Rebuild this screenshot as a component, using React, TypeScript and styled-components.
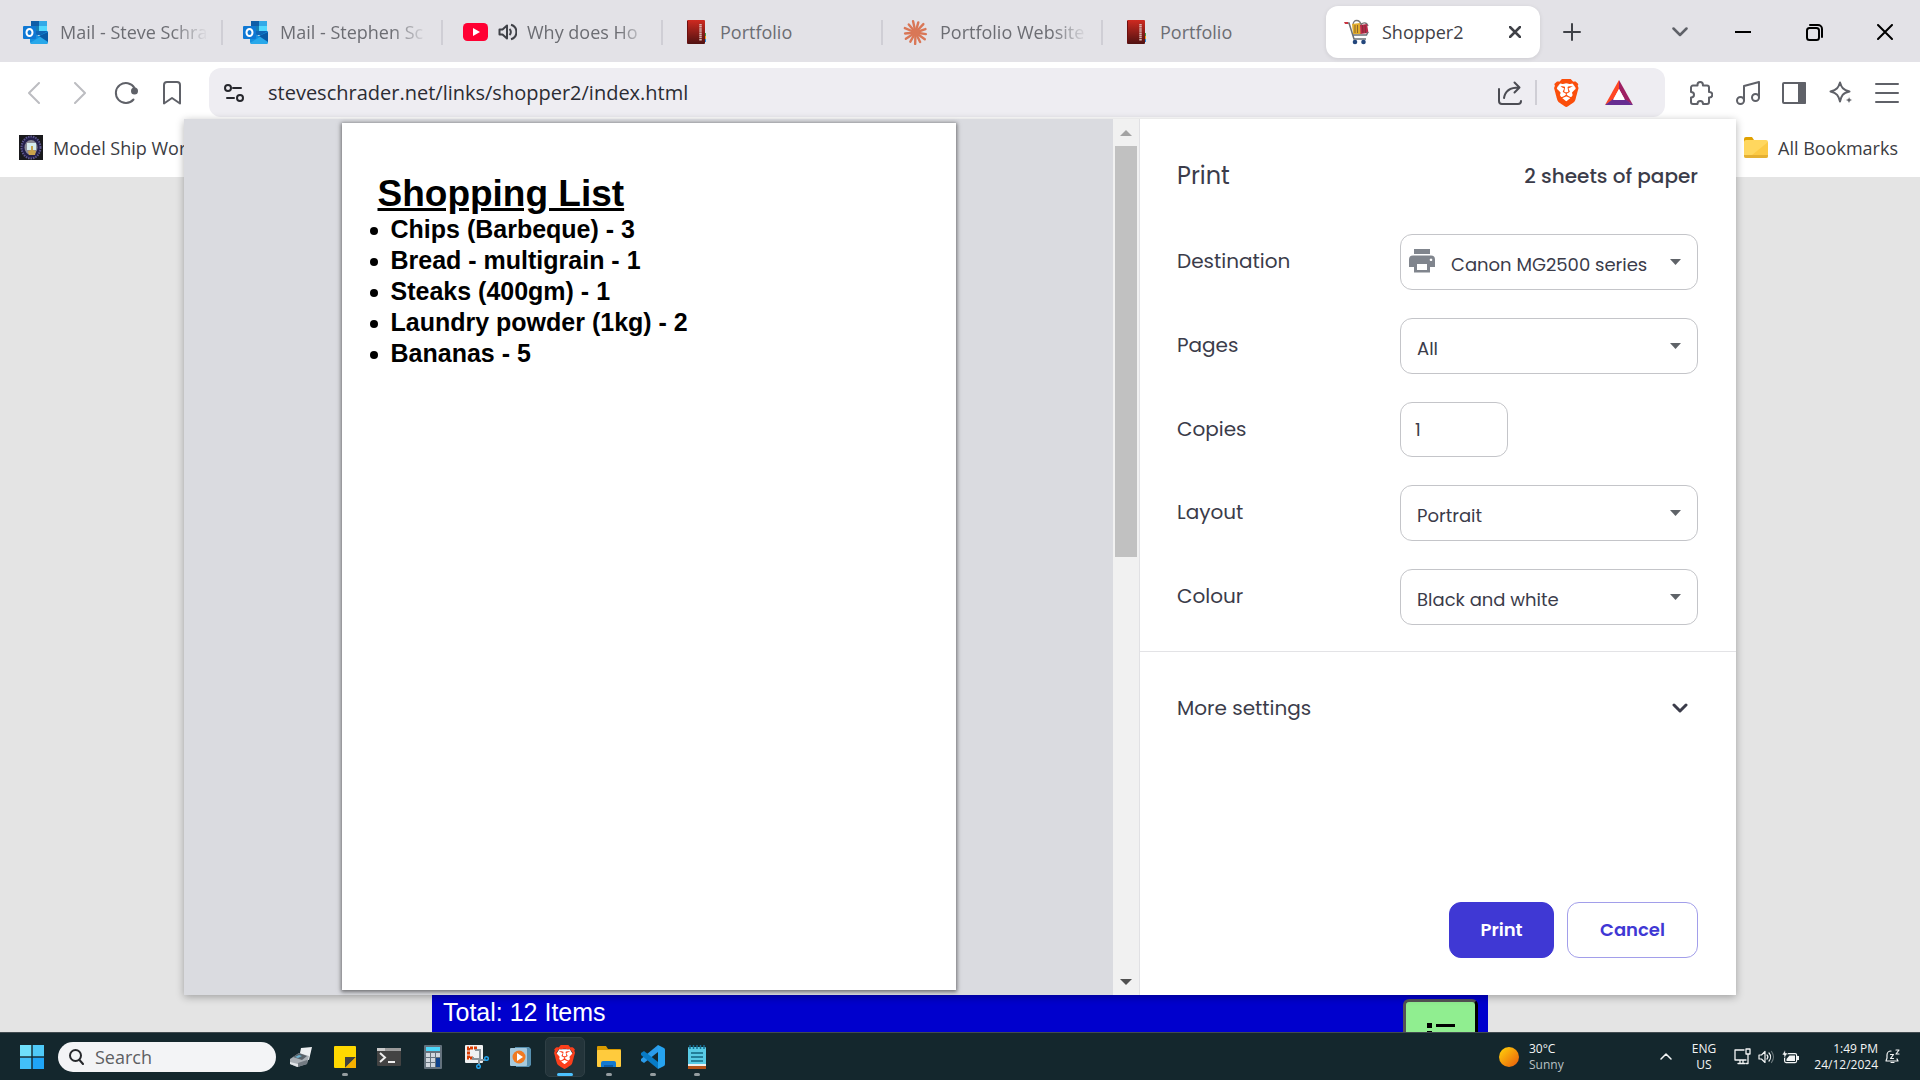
import React, { useState } from "react";
import styled, { createGlobalStyle } from "styled-components";
import { SiBrave } from "react-icons/si";

const uiFont = `"Segoe UI", "Open Sans", "Noto Sans", sans-serif`;
const dialogFont = `Poppins, Inter, "Open Sans", sans-serif`;

const GlobalStyle = createGlobalStyle`
  *, *::before, *::after { box-sizing: border-box; }
  body { margin: 0; font-family: ${uiFont}; background: #e4e4e4; }
  button, input, select { font: inherit; color: inherit; margin: 0; }
  svg { display: block; flex: none; }
`;

const Screen = styled.div`
  display: flex;
  flex-direction: column;
  height: 100vh;
  overflow: hidden;
`;

const BrowserWindow = styled.div`
  position: relative;
  flex: 1;
  min-height: 0;
  display: flex;
  flex-direction: column;
`;

/* ---------- tab strip ---------- */

const TabStrip = styled.header`
  display: flex;
  align-items: center;
  height: 62px;
  flex: none;
  padding: 2px 0 0 2px;
  background: #e3e2e7;
`;

const Tab = styled.div<{ $active?: boolean }>`
  position: relative;
  display: flex;
  align-items: center;
  gap: 12px;
  width: ${(p) => (p.$active ? 214 : 220)}px;
  height: 52px;
  margin-left: ${(p) => (p.$active ? 4 : 0)}px;
  padding: 0 ${(p) => (p.$active ? 19 : 14)}px 0 ${(p) => (p.$active ? 18 : 21)}px;
  border-radius: 12px;
  background: ${(p) => (p.$active ? "#ffffff" : "transparent")};
  box-shadow: ${(p) => (p.$active ? "0 1px 4px rgba(0, 0, 0, 0.1)" : "none")};
  color: ${(p) => (p.$active ? "#3f4147" : "#6c6d73")};
`;

const TabDivider = styled.span`
  width: 2px;
  height: 25px;
  margin: 0 -1px;
  flex: none;
  background: #cfced5;
`;

const TabTitle = styled.span<{ $fade?: boolean }>`
  flex: 1;
  min-width: 0;
  overflow: hidden;
  white-space: nowrap;
  font-size: 18px;
  line-height: 24px;
  ${(p) => p.$fade && "mask-image: linear-gradient(to right, #000 75%, transparent);"}
`;

const IconButton = styled.button<{ $width?: number }>`
  display: flex;
  align-items: center;
  justify-content: center;
  flex: none;
  width: ${(p) => p.$width ?? 46}px;
  height: 48px;
  padding: 0;
  border: 0;
  background: transparent;
`;

const CloseTab = styled(IconButton)`
  width: 12px;
`;

const WindowControls = styled.div`
  display: flex;
  margin-left: auto;
`;

/* ---------- toolbar ---------- */

const Toolbar = styled.nav`
  display: flex;
  align-items: center;
  flex: none;
  padding: 6px 10px 1px 11px;
  background: #ffffff;
  color: #5f6168;
`;

const AddressBar = styled.div`
  display: flex;
  align-items: center;
  flex: 1;
  height: 49px;
  margin: 0 12px 0 14px;
  padding: 0 32px 0 15px;
  border-radius: 12px;
  background: #eeedf2;
`;

const AddressInput = styled.input`
  flex: 1;
  min-width: 0;
  margin-left: 24px;
  padding: 0;
  border: 0;
  outline: 0;
  background: transparent;
  color: #2b2c33;
  font-size: 20px;
  line-height: 28px;
`;

const AddressDivider = styled.span`
  width: 2px;
  height: 25px;
  margin: 0 17px 0 13px;
  background: #cfced5;
`;

const AddressButton = styled(IconButton)`
  width: auto;
  & + & { margin-left: 26px; }
`;

const BookmarksBar = styled.div`
  display: flex;
  align-items: center;
  justify-content: space-between;
  height: 59px;
  flex: none;
  padding: 0 22px 0 19px;
  background: #ffffff;
`;

const Bookmark = styled.a`
  display: flex;
  align-items: center;
  gap: 10px;
  color: #3b3c42;
  font-size: 18px;
  line-height: 24px;
  text-decoration: none;
  white-space: nowrap;
`;

/* ---------- web page ---------- */

const WebPage = styled.main`
  display: flex;
  flex: 1;
  min-height: 0;
  align-items: flex-end;
  justify-content: center;
  background: #e4e4e4;
`;

const TotalBar = styled.div`
  display: flex;
  justify-content: space-between;
  align-items: flex-start;
  width: 55%;
  height: 44px;
  padding: 11px 10px 0 11px;
  overflow: hidden;
  background: #0000cd;
  color: #ffffff;
  font: 25px/26px "Liberation Sans", Arial, sans-serif;
`;

const ListButton = styled.button`
  display: flex;
  justify-content: center;
  width: 75px;
  height: 64px;
  padding: 20px 0 0;
  border: 3px outset #000000;
  border-radius: 6px;
  background: #90ee90;
`;

/* ---------- print dialog ---------- */

const PrintDialog = styled.section`
  position: absolute;
  inset: 119px 184px 37px;
  display: flex;
  background: #ffffff;
  box-shadow: 0 2px 8px rgba(0, 0, 0, 0.3);
`;

const Preview = styled.div`
  display: flex;
  justify-content: center;
  flex: 1;
  padding: 4px 0 5px;
  background: #dadbe0;
`;

const Paper = styled.article`
  height: 100%;
  aspect-ratio: 614 / 867;
  padding: 50px 36px;
  background: #ffffff;
  box-shadow: 0 1px 4px 1px rgba(0, 0, 0, 0.5);
  color: #000000;
  font-family: "Liberation Sans", Arial, sans-serif;
  font-weight: 700;
`;

const PaperTitle = styled.h1`
  margin: 0;
  font-size: 37px;
  line-height: 41px;
  text-decoration: underline;
`;

const ShoppingList = styled.ul`
  margin: 0;
  padding: 0 0 0 13px;
  list-style: none;
  font-size: 25px;
  line-height: 31px;
`;

const ShoppingItem = styled.li`
  display: flex;
  align-items: center;
  gap: 13px;
  margin-left: -21px;
  &::before {
    content: "";
    width: 8px;
    height: 8px;
    margin-top: 2px;
    border-radius: 50%;
    background: #000000;
  }
`;

const ScrollTrack = styled.div`
  display: flex;
  flex-direction: column;
  align-items: center;
  width: 26px;
  background: #f1f1f1;
`;

const ScrollArrow = styled.button<{ $color: string }>`
  display: flex;
  align-items: center;
  justify-content: center;
  width: 26px;
  height: 27px;
  padding: 0;
  border: 0;
  background: transparent;
  color: ${(p) => p.$color};
`;

const ScrollRail = styled.div`
  flex: 1;
  width: 22px;
`;

const ScrollThumb = styled.div`
  height: 50%;
  background: #c1c1c1;
`;

const Panel = styled.form`
  display: flex;
  flex-direction: column;
  width: 597px;
  border-left: 1px solid #e1e1e4;
  background: #ffffff;
  color: #3b3c4a;
  font-family: ${dialogFont};
  font-size: 20px;
  font-weight: 400;
  line-height: 28px;
`;

const PanelHeader = styled.div`
  display: flex;
  align-items: center;
  justify-content: space-between;
  height: 113px;
  margin: 0 38px 0 37px;
`;

const PanelTitle = styled.h2`
  margin: 0;
  font-size: 24px;
  font-weight: 400;
`;

const SheetCount = styled.span`
  font-weight: 500;
`;

const Settings = styled.div`
  display: flex;
  flex-direction: column;
  gap: 28px;
  padding: 2px 38px 26px 37px;
  border-bottom: 1px solid #e3e3e6;
`;

const SettingRow = styled.div`
  display: grid;
  grid-template-columns: 1fr 298px;
  align-items: center;
`;

const SettingLabel = styled.label`
  padding-bottom: 2px;
`;

const SelectWrap = styled.div`
  position: relative;
  color: #80858d;
`;

const SelectBox = styled.select<{ $withIcon?: boolean }>`
  appearance: none;
  display: block;
  width: 100%;
  height: 56px;
  padding: 5px 50px 0 ${(p) => (p.$withIcon ? 50 : 16)}px;
  border: 1px solid #c4c5c9;
  border-radius: 12px;
  background: #ffffff;
  color: #3b3c4a;
  font-size: 18px;
`;

const SelectArrow = styled.svg`
  position: absolute;
  right: 17px;
  top: 25px;
  pointer-events: none;
`;

const PrinterIcon = styled.svg`
  position: absolute;
  left: 9px;
  top: 15px;
  pointer-events: none;
`;

const CopiesInput = styled.input`
  width: 108px;
  height: 55px;
  padding: 0 14px;
  border: 1px solid #c4c5c9;
  border-radius: 12px;
  background: #ffffff;
  font-size: 18px;
`;

const MoreSettings = styled.button`
  display: flex;
  align-items: center;
  justify-content: space-between;
  height: 112px;
  padding: 0 48px 0 37px;
  border: 0;
  background: transparent;
`;

const PanelFooter = styled.div`
  display: flex;
  justify-content: flex-end;
  gap: 13px;
  margin-top: auto;
  padding: 0 38px 37px;
`;

const ActionButton = styled.button<{ $primary?: boolean }>`
  width: ${(p) => (p.$primary ? 105 : 131)}px;
  height: 56px;
  padding: 0;
  border: 1px solid ${(p) => (p.$primary ? "#3f38d4" : "#a29eea")};
  border-radius: 12px;
  background: ${(p) => (p.$primary ? "#3f38d4" : "#ffffff")};
  color: ${(p) => (p.$primary ? "#ffffff" : "#3f38d4")};
  font-size: 18px;
  font-weight: 600;
`;

/* ---------- taskbar ---------- */

const Taskbar = styled.footer`
  display: flex;
  align-items: center;
  flex: none;
  height: 48px;
  padding: 0 20px 0 20px;
  border-top: 1px solid #414b50;
  background: #14272d;
  color: #f3f5f5;
`;

const StartButton = styled(IconButton)`
  width: 24px;
  margin-right: 14px;
`;

const SearchBox = styled.label`
  display: flex;
  align-items: center;
  gap: 11px;
  width: 218px;
  height: 30px;
  margin-right: 3px;
  padding: 0 10px;
  border-radius: 15px;
  background: #f3f4f6;
  color: #26282c;
`;

const SearchInput = styled.input`
  width: 100%;
  min-width: 0;
  padding: 0;
  border: 0;
  outline: 0;
  background: transparent;
  font-size: 18px;
  line-height: 24px;
  &::placeholder { color: #5d5f63; opacity: 1; }
`;

const TaskButton = styled.button<{ $active?: boolean; $running?: boolean }>`
  position: relative;
  display: flex;
  align-items: center;
  justify-content: center;
  width: 40px;
  height: 40px;
  margin: 0 2px;
  padding: 0;
  border: 1px solid ${(p) => (p.$active ? "#2f3f45" : "transparent")};
  border-radius: 5px;
  background: ${(p) => (p.$active ? "#23343a" : "transparent")};
  &::after {
    content: "";
    display: ${(p) => (p.$running || p.$active ? "block" : "none")};
    position: absolute;
    bottom: 0;
    width: ${(p) => (p.$active ? 16 : 6)}px;
    height: 3px;
    border-radius: 2px;
    background: ${(p) => (p.$active ? "#4cc2ff" : "#959da0")};
  }
`;

const Weather = styled.div`
  display: flex;
  align-items: center;
  gap: 10px;
  margin-left: auto;
  margin-right: 88px;
  width: 73px;
`;

const Stack = styled.div<{ $align?: string }>`
  display: flex;
  flex-direction: column;
  font-size: 12px;
  line-height: 16px;
  white-space: nowrap;
  text-align: ${(p) => p.$align ?? "left"};
`;

const Muted = styled.span`
  color: #b9c1c4;
`;

const Language = styled.div`
  width: 26px;
  margin: 0 17px 0 19px;
`;

const Tray = styled.div`
  display: flex;
  align-items: center;
  gap: 7px;
`;

const Clock = styled.div`
  width: 66px;
  margin: 0 7px 0 13px;
`;

/* ---------- drawings ---------- */

const Outlook = () => (
  <svg width="25" height="23" viewBox="0 0 25 23">
    <rect x="8" y="0" width="16" height="14" fill="#1066b5" />
    <rect x="8" y="0" width="8" height="5" fill="#0f5ea8" />
    <rect x="16" y="0" width="8" height="5" fill="#32a9e7" />
    <rect x="16" y="5" width="8" height="5" fill="#50d9ff" />
    <rect x="8" y="5" width="8" height="5" fill="#167eb4" />
    <path d="M7 10l9 5 9-5v11a2 2 0 0 1-2 2H9a2 2 0 0 1-2-2z" fill="#1490df" />
    <path d="M7 22l18-11v10a2 2 0 0 1-2 2H9z" fill="#28a8ea" />
    <path d="M25 11v10l-9-6z" fill="#0a5aa5" />
    <rect x="0" y="5" width="13" height="13" rx="1" fill="#0f78d4" />
    <ellipse cx="6.500" cy="11.500" rx="3" ry="3.500" fill="none" stroke="#fff" strokeWidth="2" />
  </svg>
);

const YouTube = () => (
  <svg width="25" height="18" viewBox="0 0 25 18">
    <rect width="25" height="18" rx="4.500" fill="#ff0033" />
    <path d="M10 5l7 4-7 4z" fill="#fff" />
  </svg>
);

const SoundIcon = styled.svg`
  margin: 0 -2px;
`;

const Sound = () => (
  <SoundIcon width="19" height="18" viewBox="0 0 19 18" fill="none" stroke="#3f4147" strokeWidth="2">
    <path d="M1.500 6.500h3L9 2.500v13l-4.500-4H1.500z" strokeLinejoin="round" />
    <path d="M11.500 6a4 4 0 0 1 0 6M13 1.800a7.500 7.500 0 0 1 0 14.400" />
  </SoundIcon>
);

const Portfolio = () => (
  <svg width="25" height="25" viewBox="-2 0 25 25">
    <defs>
      <linearGradient id="cover" x1="0" y1="0" x2="0" y2="1">
        <stop offset="0" stopColor="#cf2a20" />
        <stop offset="1" stopColor="#4f1111" />
      </linearGradient>
    </defs>
    <rect x="20" y="13" width="1" height="3" fill="#42a047" />
    <rect x="20" y="16" width="1" height="3" fill="#f0a020" />
    <rect x="20" y="19" width="1" height="3" fill="#2a8be0" />
    <rect x="2" y="0" width="18" height="24" rx="1" fill="url(#cover)" />
    <rect x="2" y="1" width="1" height="22" fill="#6b1010" />
    <path d="M15.500 4v17" stroke="#d9b6b3" strokeWidth="2.500" strokeDasharray="1.500 .6" />
  </svg>
);

const Burst = () => (
  <svg width="25" height="25" viewBox="0 0 25 25" stroke="#d97757" strokeWidth="2.400" strokeLinecap="round">
    {Array.from({ length: 13 }, (_, i) => {
      const a = (i * 2 * Math.PI) / 13 + 0.15;
      const r = i % 2 ? 11.5 : 10.5;
      return <line key={i} x1="12.500" y1="12.500" x2={12.5 + r * Math.cos(a)} y2={12.5 + r * Math.sin(a)} />;
    })}
    <circle cx="12.500" cy="12.500" r="2.500" fill="#d97757" />
  </svg>
);

const Cart = () => (
  <svg width="26" height="26" viewBox="0 0 26 26">
    <path d="M9 6c0-6 7-6 8 0M17 6c1-3 6-3 7 1" fill="none" stroke="#777" strokeWidth="1.300" />
    <path d="M8 5l8-1 1 11H9z" fill="#e2ad2c" />
    <path d="M16 6l7-1 1.500 9-8 1z" fill="#bb2849" />
    <path d="M11 6v8M13.500 6v8M18.500 6l.5 8M21 6l.5 8" stroke="#54382c" strokeWidth=".6" />
    <path d="M1 4h4l5 16h12M8.500 16h14l1.500-3" fill="none" stroke="#6b7076" strokeWidth="1.500" />
    <path d="M0 3h4v2H1z" fill="#c93541" />
    <circle cx="11" cy="23" r="2.300" fill="#24477c" />
    <circle cx="19.500" cy="23" r="2.300" fill="#24477c" />
  </svg>
);

const BraveLion = ({ size = 28, color = "#fb4e0b" }) => (
  <svg width={size * 0.88} height={size} viewBox="0 0 24 28" preserveAspectRatio="none">
    <path d="M6 5h12l3 5-3 10-6 5-6-5L3 10z" fill="#fff" />
    <SiBrave x="-2" y="0" size={28} color={color} />
  </svg>
);

const RewardsTriangle = () => (
  <svg width="28" height="26" viewBox="0 0 28 26">
    <path d="M14 0L0 25l8-5 6-11z" fill="#ff4724" />
    <path d="M14 0l14 25-8-5-6-11z" fill="#9e1f63" />
    <path d="M0 25h28l-8-6H8z" fill="#662d91" />
    <path d="M14 9l6 11H8z" fill="#fff" />
  </svg>
);

const line = { fill: "none", stroke: "currentColor", strokeWidth: 2, strokeLinecap: "round", strokeLinejoin: "round" } as const;

const ShipBadge = () => (
  <svg width="24" height="25" viewBox="0 0 24 25">
    <rect width="24" height="25" fill="#19191c" />
    <ellipse cx="12" cy="12.500" rx="9.500" ry="11" fill="#24204c" stroke="#5c568d" strokeWidth="2" strokeDasharray="1.500 1" />
    <ellipse cx="12" cy="12.500" rx="6.500" ry="7.500" fill="#8d8c96" />
    <path d="M8 8h9v7H8z" fill="#d6ecee" />
    <path d="M9 16l3-1v-4h2v4l3 1-1 4h-6z" fill="#c9a24b" />
  </svg>
);

const Folder = () => (
  <svg width="24" height="21" viewBox="0 0 24 21">
    <path d="M0 2q0-2 2-2h6l2 3h12v8H0z" fill="#e0a100" />
    <rect y="3" width="24" height="18" rx="2" fill="#ffd75e" />
    <path d="M0 18h24v1q0 2-2 2H2q-2 0-2-2z" fill="#e5b032" />
    <path d="M24 5v13H8z" fill="#fcca45" />
  </svg>
);

const Caret = () => (
  <SelectArrow width="11" height="7" viewBox="0 0 11 7">
    <path d="M0 0h11L5.500 6z" fill="#5f6368" />
  </SelectArrow>
);

/* ---------- app ---------- */

const tabs = [
  { title: "Mail - Steve Schra", icon: <Outlook />, fade: true },
  { title: "Mail - Stephen Sc", icon: <Outlook />, fade: true },
  { title: "Why does Ho", icon: <YouTube />, sound: true, fade: true },
  { title: "Portfolio", icon: <Portfolio /> },
  { title: "Portfolio Website", icon: <Burst />, fade: true },
  { title: "Portfolio", icon: <Portfolio /> },
];

const items = ["Chips (Barbeque) - 3", "Bread - multigrain - 1", "Steaks (400gm) - 1", "Laundry powder (1kg) - 2", "Bananas - 5"];

function SelectSetting({ id, label, options, printer }: { id: string; label: string; options: string[]; printer?: boolean }) {
  return (
    <SettingRow>
      <SettingLabel htmlFor={id}>{label}</SettingLabel>
      <SelectWrap>
        <SelectBox id={id} $withIcon={printer}>
          {options.map((o) => (
            <option key={o}>{o}</option>
          ))}
        </SelectBox>
        {printer && (
          <PrinterIcon width="26" height="24" viewBox="0 0 26 24">
            <path fill="currentColor" fillRule="evenodd" d="M5 0h16v5H5zM4 6.500h18a4 4 0 0 1 4 4V18h-5v5.500H5V18H0v-7.500a4 4 0 0 1 4-4zM8 15v6h10v-6zM22 9.500a1.300 1.300 0 1 0 .01 0z" />
          </PrinterIcon>
        )}
        <Caret />
      </SelectWrap>
    </SettingRow>
  );
}

export default function App() {
  const [url, setUrl] = useState("steveschrader.net/links/shopper2/index.html");
  const [copies, setCopies] = useState("1");
  return (
    <Screen>
      <GlobalStyle />
      <BrowserWindow>
        <TabStrip>
          {tabs.map((t, i) => (
            <React.Fragment key={i}>
              <Tab>
                {t.icon}
                {t.sound && <Sound />}
                <TabTitle $fade={t.fade}>{t.title}</TabTitle>
              </Tab>
              {i < tabs.length - 1 && <TabDivider />}
            </React.Fragment>
          ))}
          <Tab $active>
            <Cart />
            <TabTitle>Shopper2</TabTitle>
            <CloseTab aria-label="Close tab">
              <svg width="12" height="12" viewBox="0 0 12 12" {...line} strokeWidth={2.5}>
                <path d="M1 1l10 10M11 1L1 11" />
              </svg>
            </CloseTab>
          </Tab>
          <IconButton $width={64} aria-label="New tab">
            <svg width="18" height="18" viewBox="0 0 18 18" {...line} stroke="#3f4147">
              <path d="M9 1v16M1 9h16" />
            </svg>
          </IconButton>
          <WindowControls>
            <IconButton $width={56} aria-label="Search tabs">
              <svg width="16" height="10" viewBox="0 0 16 10" {...line} stroke="#5f6168" strokeWidth={2.5}>
                <path d="M1.500 1.500L8 8l6.500-6.500" />
              </svg>
            </IconButton>
            <IconButton $width={70} aria-label="Minimise">
              <svg width="16" height="2" viewBox="0 0 16 2"><path d="M0 1h16" stroke="#000" strokeWidth="2" /></svg>
            </IconButton>
            <IconButton $width={72} aria-label="Restore">
              <svg width="17" height="17" viewBox="0 0 17 17" {...line} stroke="#000">
                <rect x="1" y="4" width="12" height="12" rx="2.500" />
                <path d="M4 1h8a4 4 0 0 1 4 4v8" />
              </svg>
            </IconButton>
            <IconButton $width={70} aria-label="Close window">
              <svg width="16" height="16" viewBox="0 0 16 16" {...line} stroke="#000">
                <path d="M1 1l14 14M15 1L1 15" />
              </svg>
            </IconButton>
          </WindowControls>
        </TabStrip>

        <Toolbar>
          <IconButton aria-label="Back">
            <svg width="12" height="22" viewBox="0 0 12 22" {...line} stroke="#bcbdc1"><path d="M11 1L1 11l10 10" /></svg>
          </IconButton>
          <IconButton aria-label="Forward">
            <svg width="12" height="22" viewBox="0 0 12 22" {...line} stroke="#bcbdc1"><path d="M1 1l10 10L1 21" /></svg>
          </IconButton>
          <IconButton aria-label="Reload">
            <svg width="24" height="24" viewBox="0 0 24 24" {...line}>
              <path d="M19.500 18.500A10 10 0 1 1 20.500 7" />
              <circle cx="20.500" cy="10" r="2.500" fill="currentColor" stroke="currentColor" />
            </svg>
          </IconButton>
          <IconButton aria-label="Bookmark">
            <svg width="18" height="24" viewBox="0 0 18 24" {...line}><path d="M1 22.500V4a3 3 0 0 1 3-3h10a3 3 0 0 1 3 3v18.500l-8-5.500z" /></svg>
          </IconButton>
          <AddressBar>
            <svg width="20" height="18" viewBox="0 0 20 18" {...line} stroke="#26272d">
              <circle cx="4" cy="4" r="3" /><path d="M9 4h8M3 14h7" /><circle cx="16" cy="14" r="3" />
            </svg>
            <AddressInput aria-label="Address" value={url} onChange={(e) => setUrl(e.target.value)} />
            <AddressButton aria-label="Share">
              <svg width="24" height="24" viewBox="0 0 24 24" {...line} stroke="#4b4c53">
                <path d="M1 8v12a3 3 0 0 0 3 3h16a3 3 0 0 0 3-3M6 17C7 10 12 6.500 21 6.500M16.500 1.500l5 5-5 5" />
              </svg>
            </AddressButton>
            <AddressDivider />
            <AddressButton aria-label="Brave Shields"><BraveLion /></AddressButton>
            <AddressButton aria-label="Rewards"><RewardsTriangle /></AddressButton>
          </AddressBar>
          <IconButton $width={47} aria-label="Extensions">
            <svg width="24" height="24" viewBox="0 0 24 24" {...line}>
              <path d="M2 6.500a2 2 0 0 1 2-2h4.500V3.800a2.700 2.700 0 0 1 5.400 0v.7H18a2 2 0 0 1 2 2V11h.6a2.700 2.700 0 0 1 0 5.400H20V21a2 2 0 0 1-2 2h-4c0-4-5.500-4-5.500 0H4a2 2 0 0 1-2-2v-4.500c4 0 4-5.500 0-5.500z" />
            </svg>
          </IconButton>
          <IconButton $width={47} aria-label="Media">
            <svg width="24" height="24" viewBox="0 0 24 24" {...line}>
              <circle cx="4.500" cy="19.500" r="3.500" /><circle cx="19.500" cy="16.500" r="3.500" /><path d="M8 19.500V5l15-4v15.500" />
            </svg>
          </IconButton>
          <IconButton $width={46} aria-label="Side panel">
            <svg width="24" height="22" viewBox="0 0 24 22" {...line}>
              <rect x="1" y="1" width="22" height="20" rx="1" /><path d="M17 1h6v20h-6z" fill="currentColor" />
            </svg>
          </IconButton>
          <IconButton $width={47} aria-label="Assistant">
            <svg width="24" height="24" viewBox="0 0 24 24" {...line}>
              <path d="M11 1.500c1.500 5 3 7.500 9.500 9-7 1.500-8 4-9.500 10-1.500-6-3-8.500-9.500-10C8 9 9.500 6.500 11 1.500z" />
              <path d="M20 14l1.200 3.800L25 19l-3.800 1.200L20 24l-1.200-3.800L15 19l3.800-1.200z" fill="currentColor" stroke="#fff" strokeWidth="1" />
            </svg>
          </IconButton>
          <IconButton $width={46} aria-label="Menu">
            <svg width="24" height="20" viewBox="0 0 24 20" {...line}><path d="M1 1h22M1 10h22M1 19h22" /></svg>
          </IconButton>
        </Toolbar>

        <BookmarksBar>
          <Bookmark href="#"><ShipBadge />Model Ship World</Bookmark>
          <Bookmark href="#"><Folder />All Bookmarks</Bookmark>
        </BookmarksBar>

        <WebPage>
          <TotalBar>
            <span>Total: 12 Items</span>
            <ListButton aria-label="Show list">
              <svg width="28" height="26" viewBox="0 0 28 26" fill="#000">
                <path d="M0 1h5v5H0zM9 2h19v3H9zM0 9h5v5H0zM9 10h19v3H9z" />
              </svg>
            </ListButton>
          </TotalBar>
        </WebPage>

        <PrintDialog role="dialog" aria-label="Print">
          <Preview>
            <Paper>
              <PaperTitle>Shopping List</PaperTitle>
              <ShoppingList>
                {items.map((i) => <ShoppingItem key={i}>{i}</ShoppingItem>)}
              </ShoppingList>
            </Paper>
          </Preview>
          <ScrollTrack>
            <ScrollArrow $color="#a3a3a3" aria-label="Scroll up">
              <svg width="12" height="6" viewBox="0 0 12 6"><path d="M0 6l6-6 6 6z" fill="currentColor" /></svg>
            </ScrollArrow>
            <ScrollRail><ScrollThumb /></ScrollRail>
            <ScrollArrow $color="#505050" aria-label="Scroll down">
              <svg width="12" height="6" viewBox="0 0 12 6"><path d="M0 0l6 6 6-6z" fill="currentColor" /></svg>
            </ScrollArrow>
          </ScrollTrack>
          <Panel onSubmit={(e) => e.preventDefault()}>
            <PanelHeader>
              <PanelTitle>Print</PanelTitle>
              <SheetCount>2 sheets of paper</SheetCount>
            </PanelHeader>
            <Settings>
              <SelectSetting id="destination" label="Destination" options={["Canon MG2500 series"]} printer />
              <SelectSetting id="pages" label="Pages" options={["All"]} />
              <SettingRow>
                <SettingLabel htmlFor="copies">Copies</SettingLabel>
                <CopiesInput id="copies" value={copies} onChange={(e) => setCopies(e.target.value)} />
              </SettingRow>
              <SelectSetting id="layout" label="Layout" options={["Portrait"]} />
              <SelectSetting id="colour" label="Colour" options={["Black and white"]} />
            </Settings>
            <MoreSettings type="button">
              More settings
              <svg width="16" height="10" viewBox="0 0 16 10" {...line} strokeWidth={3}><path d="M2 2l6 6 6-6" /></svg>
            </MoreSettings>
            <PanelFooter>
              <ActionButton $primary type="submit">Print</ActionButton>
              <ActionButton type="button">Cancel</ActionButton>
            </PanelFooter>
          </Panel>
        </PrintDialog>
      </BrowserWindow>

      <Taskbar>
        <StartButton aria-label="Start">
          <svg width="24" height="24" viewBox="0 0 24 24">
            <path d="M0 0h11.300v11.300H0z" fill="#6fe0fb" /><path d="M12.700 0H24v11.300H12.700z" fill="#4fcaf8" />
            <path d="M0 12.700h11.300V24H0z" fill="#42c0f8" /><path d="M12.700 12.700H24V24H12.700z" fill="#1fa5f7" />
          </svg>
        </StartButton>
        <SearchBox>
          <svg width="16" height="16" viewBox="0 0 16 16" {...line}><circle cx="7.500" cy="6.500" r="5.500" /><path d="M11.500 11l3.500 4" /></svg>
          <SearchInput aria-label="Search" placeholder="Search" />
        </SearchBox>
        <TaskButton aria-label="Printer">
          <svg width="24" height="22" viewBox="0 0 24 22">
            <path d="M12 2l11-1-3 13-10-2z" fill="#eef0f2" />
            <path d="M1 13l9-6 10 3-2 8-10 3-7-3z" fill="#a9afb5" />
            <path d="M4 11l6-4 8 3-5 4z" fill="#596269" /><path d="M1 16l8 2v3l-8-3z" fill="#e2e5e8" /><path d="M9 17l9-3v4l-9 3z" fill="#737b82" />
            <path d="M6 11l4-2 3 1-4 2z" fill="#6fb2cf" />
          </svg>
        </TaskButton>
        <TaskButton $running aria-label="Sticky Notes">
          <svg width="22" height="22" viewBox="0 0 22 22"><rect width="22" height="22" rx="1" fill="#ffd800" /><path d="M11 22V11h11L11 22z" fill="#41413f" /><path d="M22 11v11H11z" fill="#f6b000" /></svg>
        </TaskButton>
        <TaskButton aria-label="Terminal">
          <svg width="24" height="18" viewBox="0 0 24 18"><rect width="24" height="18" rx="1" fill="#434343" /><path d="M0 0h24v3H0z" fill="#9a9a9a" /><path d="M0 0h8v3H0z" fill="#cbcbcb" /><path d="M3 5l5 4.500L3 14M11 14h7" stroke="#eee" strokeWidth="2" fill="none" /></svg>
        </TaskButton>
        <TaskButton aria-label="Calculator">
          <svg width="18" height="24" viewBox="0 0 18 24"><rect width="18" height="24" rx="1" fill="#64727d" /><path d="M2 2h14v4H2z" fill="#4cd7fa" /><path d="M2 8h4v4H2zM7 8h4v4H7zM12 8h4v4h-4zM2 13h4v4H2zM7 13h4v4H7zM2 18h4v4H2zM7 18h4v4H7z" fill="#d0d7de" /><path d="M12 13h4v9h-4z" fill="#0e438d" /></svg>
        </TaskButton>
        <TaskButton aria-label="Snipping Tool">
          <svg width="24" height="24" viewBox="0 0 24 24"><rect width="18" height="18" rx="1" fill="#f0f1f2" /><path d="M12 3H3.500v10H8" fill="none" stroke="#d83b01" strokeWidth="3" strokeDasharray="3 1" /><path d="M10 5h5v9H8v-2" fill="none" stroke="#8b9399" strokeWidth="2" /><path d="M14 15h6M14 15v5" stroke="#8b9399" strokeWidth="2" /><circle cx="21.500" cy="13.500" r="1.800" fill="none" stroke="#22a4ee" strokeWidth="1.500" /><circle cx="13.500" cy="21.500" r="1.800" fill="none" stroke="#22a4ee" strokeWidth="1.500" /></svg>
        </TaskButton>
        <TaskButton aria-label="Media Player">
          <svg width="22" height="20" viewBox="0 0 22 20"><path d="M5 0h14l2 2v16l-2 2H6z" fill="#5790b0" /><rect y="1" width="17" height="18" rx="1" fill="#a7cadd" /><circle cx="9" cy="10" r="6.500" fill="#f07a22" /><path d="M7 6l6 4-6 4z" fill="#fff" /></svg>
        </TaskButton>
        <TaskButton $active aria-label="Brave"><BraveLion size={24} color="#fb3f1c" /></TaskButton>
        <TaskButton $running aria-label="File Explorer">
          <svg width="24" height="22" viewBox="0 0 24 22"><path d="M0 1q0-1 1-1h8l2 3h12q1 0 1 1v5H0z" fill="#d99a00" /><rect y="4" width="24" height="17" rx="1" fill="#ffcb3d" /><path d="M4 21v-4q0-2 2-2h11q2 0 2 2v4z" fill="#1479cf" /><path d="M7 19h9v2H7z" fill="#0d5aa5" /></svg>
        </TaskButton>
        <TaskButton $running aria-label="Visual Studio Code">
          <svg width="24" height="24" viewBox="0 0 24 24"><path d="M17 0l6 3q1 .5 1 2v14q0 1.500-1 2l-6 3z" fill="#26a3ef" /><path d="M17 0v7L3 18l-3-2v-2z" fill="#2b9bea" /><path d="M17 24v-7L3 6 0 8v2z" fill="#087bc6" /></svg>
        </TaskButton>
        <TaskButton $running aria-label="Notepad">
          <svg width="18" height="24" viewBox="0 0 18 24"><path d="M0 20h18v4H0z" fill="#b55218" /><rect y="2" width="18" height="19" rx="1" fill="#58cbe5" /><path d="M0 19h18v2H0z" fill="#eee" /><path d="M2 0v4M5.500 0v4M9 0v4M12.500 0v4M16 0v4" stroke="#176e91" strokeWidth="1.500" /><path d="M3 8h12M3 12h12M3 16h12" stroke="#126580" strokeWidth="1.500" /></svg>
        </TaskButton>

        <Weather>
          <svg width="20" height="20" viewBox="0 0 20 20">
            <defs><linearGradient id="sun" x1="0" y1="0" x2="1" y2="1"><stop offset=".1" stopColor="#ffca0a" /><stop offset="1" stopColor="#e8590c" /></linearGradient></defs>
            <circle cx="10" cy="10" r="10" fill="url(#sun)" />
          </svg>
          <Stack><span>30°C</span><Muted>Sunny</Muted></Stack>
        </Weather>
        <svg width="12" height="7" viewBox="0 0 12 7" {...line} strokeWidth={1.5}><path d="M1 6l5-5 5 5" /></svg>
        <Language><Stack $align="center"><span>ENG</span><span>US</span></Stack></Language>
        <Tray>
          <svg width="17" height="17" viewBox="0 0 17 17" {...line} strokeWidth={1.3}><path d="M10 2H1v10h11M4 15.500h7M6 12v3M9 12v3" /><path d="M12 1h4v5h-4zM14 6v9.500h-2" /></svg>
          <svg width="17" height="14" viewBox="0 0 17 14" {...line} strokeWidth={1.2}><path d="M1 5h2.500L7 1.500v11L3.500 9H1z" /><path d="M9 5a3 3 0 0 1 0 4M11 3a6 6 0 0 1 0 8" /><path d="M13.500 1.500a9 9 0 0 1 0 11" opacity=".4" /></svg>
          <svg width="17" height="14" viewBox="0 0 17 14"><rect x="2.600" y="3.600" width="12" height="9" rx="1.500" fill="none" stroke="#f3f5f5" strokeWidth="1.200" /><path d="M4.500 9l3-3.500H13v5.500H4.500zM15 6h2v4h-2z" fill="#f3f5f5" /><path d="M3 0L0 5h2v3l4-5H3.500z" fill="#f3f5f5" stroke="#14272d" strokeWidth=".6" /></svg>
        </Tray>
        <Clock><Stack $align="right"><span>1:49 PM</span><span>24/12/2024</span></Stack></Clock>
        <svg width="15" height="15" viewBox="0 0 15 15" {...line} strokeWidth={1.2}>
          <path d="M6 2a4 4 0 0 0-4 4v3l-1 3h12l-1-2M6 13.500h3M5.500 5.500h3l-3 4h3M11 1h3l-3 4h3" />
        </svg>
      </Taskbar>
    </Screen>
  );
}
